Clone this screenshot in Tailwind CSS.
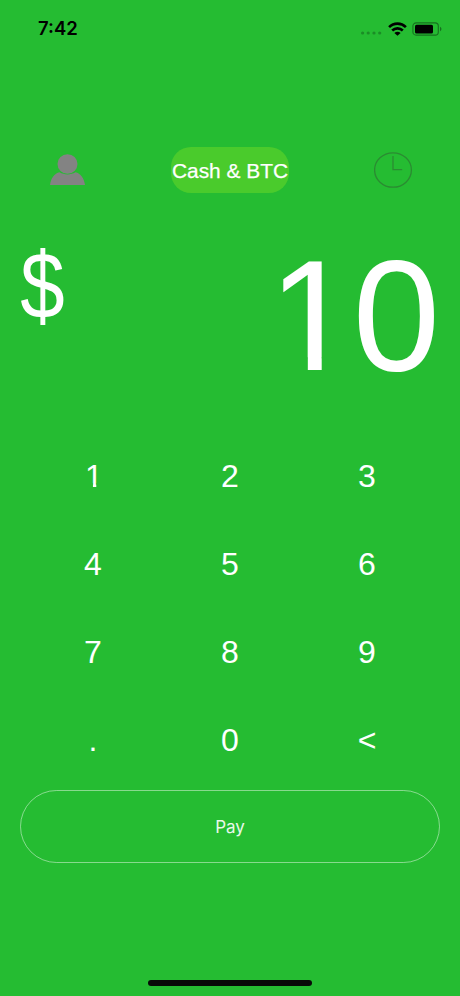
<!DOCTYPE html>
<html lang="en">
<head>
<meta charset="utf-8">
<title>Cash</title>
<script src="https://cdn.jsdelivr.net/npm/@tailwindcss/browser@4"></script>
</head>
<body class="bg-[#25bc32]">
<main class="w-[460px] h-[996px] overflow-hidden bg-[#25bc32] flex flex-col text-white font-['Liberation_Sans',sans-serif]">
  <header class="h-[57px] shrink-0 pl-[38px] pr-[17px] flex items-center justify-between text-black">
    <span class="font-['Inter',sans-serif] font-semibold text-[18.5px] leading-none">7:42</span>
    <div class="flex items-center">
      <svg class="w-[22px] h-[14px] mr-[5px]" viewBox="0 0 22 14" fill="#1b8d26"><circle cx="1.6" cy="11" r="1.6"/><circle cx="7.2" cy="11" r="1.6"/><circle cx="13" cy="11" r="1.6"/><circle cx="18.7" cy="11" r="1.6"/></svg>
      <svg class="w-[19px] h-[14px] mr-[5px]" viewBox="0 0 19 14" fill="none" stroke="#000" stroke-width="2.6"><path d="M1.1 5.1C5.7.5 13.3.5 17.9 5.1M4.2 8.5c3-2.9 7.6-2.9 10.6 0"/><path d="M9.5 13.8 6.4 10.9c1.8-1.5 4.4-1.5 6.2 0z" fill="#000" stroke="none"/></svg>
      <svg class="w-[31px] h-[14px]" viewBox="0 0 31 14"><rect x=".9" y=".9" width="25.4" height="12.2" rx="3.2" fill="none" stroke="#17701f" stroke-width="1.1"/><rect x="3" y="2.7" width="18" height="8.8" rx="1.5"/><path d="M28 4.8c2 .8 2 3.6 0 4.4z" fill="#17701f"/></svg>
    </div>
  </header>
  <nav class="mt-[90px] h-[46px] shrink-0 pl-[50px] pr-[47px] flex items-center justify-between">
    <svg class="w-[35px] h-[32px]" viewBox="0 0 35 32" fill="#838383"><ellipse cx="17.5" cy="10" rx="10" ry="9.8"/><path d="M0 31C.8 24 4.5 19.5 9.500 18.300c5 2.800 11 2.800 16 0C30.500 19.500 34.200 24 35 31z"/></svg>
    <button class="w-[118px] h-[46px] -mr-[1px] rounded-[20px] bg-[#4acb2c] text-[20.9px] leading-none whitespace-nowrap flex items-center justify-center pt-[2px] [-webkit-text-stroke:0.25px_white]">Cash &amp; BTC</button>
    <svg class="w-[39px] h-[36px]" viewBox="0 0 39 36" fill="none" stroke="#2b8b32" stroke-width="1.3"><ellipse cx="19" cy="18" rx="18.4" ry="17.2"/><path d="M19 4v13.7h9.2"/></svg>
  </nav>
  <section class="mt-[37px] h-[170px] shrink-0 pl-[16px] pr-[20px] flex justify-between">
    <span class="mt-[8px] text-[95px] leading-none scale-x-[0.84]">$</span>
    <span class="flex text-[157px] leading-[171px]"><span class="translate-x-[3px] [clip-path:polygon(0_0,100%_0,100%_75%,61.1%_75%,61.1%_100%,45.2%_100%,45.2%_75%,0_75%)]">1</span><span>0</span></span>
  </section>
  <section class="mt-[31.5px] h-[353px] shrink-0 mx-[24.5px] grid grid-cols-3 grid-rows-4 place-items-center text-[32px] leading-none">
    <span class="translate-x-[1px] [clip-path:polygon(0_0,100%_0,100%_74%,63%_74%,63%_100%,44%_100%,44%_74%,0_74%)]">1</span><span>2</span><span>3</span>
    <span>4</span><span>5</span><span>6</span>
    <span>7</span><span>8</span><span>9</span>
    <span>.</span><span>0</span><span>&lt;</span>
  </section>
  <button class="mt-[5.5px] h-[73px] shrink-0 mx-[20px] pt-[2px] rounded-full border border-white/45 font-['Inter',sans-serif] text-[17px] text-white/90">Pay</button>
  <div class="mt-auto mb-[10px] ml-[148px] w-[164px] h-[6px] rounded-full bg-[#080a08]"></div>
</main>
</body>
</html>
